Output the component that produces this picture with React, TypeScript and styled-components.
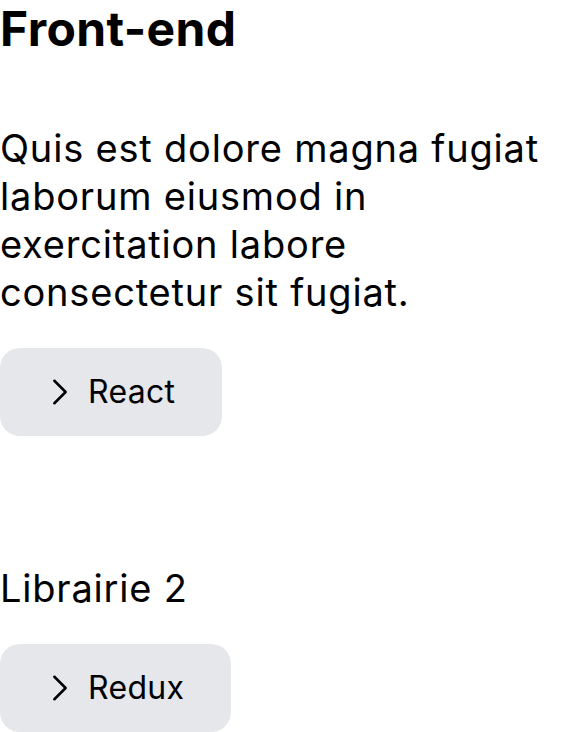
import styled, { createGlobalStyle } from "styled-components";

const GlobalStyle = createGlobalStyle`
  html, body {
    margin: 0;
    padding: 0;
    background: #ffffff;
  }
  body {
    font-family: Inter, "Noto Sans", sans-serif;
    color: #000000;
  }
`;

const Page = styled.main`
  display: flex;
  flex-direction: column;
  align-items: flex-start;
`;

const Title = styled.h1`
  margin: 0;
  font-size: 48px;
  font-weight: 700;
  line-height: 58px;
  letter-spacing: 0.4px;
`;

const Text = styled.p<{ $top: number }>`
  margin: ${({ $top }) => $top}px 0 32px;
  font-size: 38px;
  font-weight: 400;
  line-height: 48px;
  letter-spacing: 0.8px;
`;

const Chip = styled.button`
  display: inline-flex;
  align-items: center;
  gap: 10px;
  height: 88px;
  padding: 0 47px 0 42px;
  border: none;
  border-radius: 20px;
  background: #e5e7eb;
  color: #000000;
  font-family: inherit;
  font-size: 32px;
  line-height: 40px;
  letter-spacing: 0.3px;
  cursor: pointer;
`;

const Chevron = () => (
  <svg
    width="36"
    height="36"
    viewBox="0 0 24 24"
    fill="none"
    stroke="currentColor"
    strokeWidth="1.7"
    strokeLinecap="round"
    strokeLinejoin="round"
  >
    <path d="m8.25 4.5 7.5 7.5-7.5 7.5" />
  </svg>
);

export default function App() {
  return (
    <>
      <GlobalStyle />
      <Page>
        <Title>Front-end</Title>
        <Text $top={66}>
          Quis est dolore magna fugiat laborum eiusmod in exercitation labore
          consectetur sit fugiat.
        </Text>
        <Chip>
          <Chevron />
          React
        </Chip>
        <Text $top={128}>Librairie 2</Text>
        <Chip>
          <Chevron />
          Redux
        </Chip>
      </Page>
    </>
  );
}
